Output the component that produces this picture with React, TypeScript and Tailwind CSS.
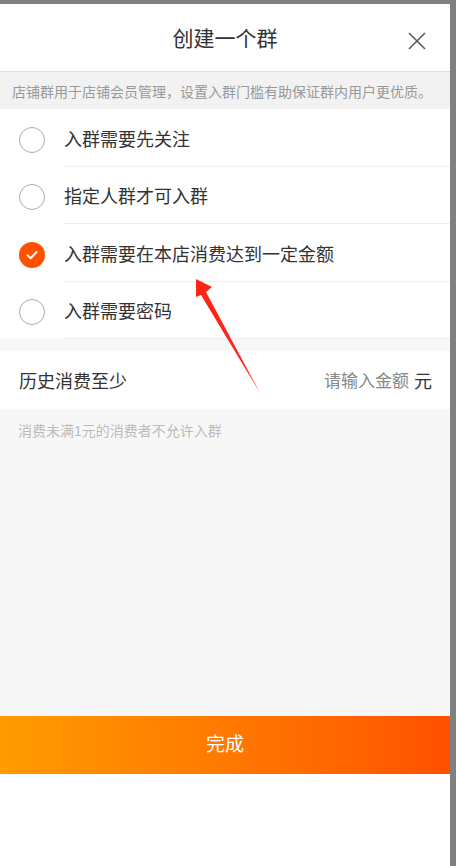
const options = [
  { label: "入群需要先关注", checked: false, h: "h-[58px]" },
  { label: "指定人群才可入群", checked: false, h: "h-[57px]" },
  { label: "入群需要在本店消费达到一定金额", checked: true, h: "h-[58px]" },
  { label: "入群需要密码", checked: false, h: "h-[57px]" },
]

function Radio({ checked }: { checked: boolean }) {
  if (checked) {
    return (
      <div className="w-[26px] h-[26px] mt-[3px] rounded-full bg-[#ff5000] flex items-center justify-center shrink-0">
        <svg width="14" height="14" viewBox="0 0 14 14" fill="none">
          <path d="M2.5 7.2 L5.7 10.2 L11.5 4" stroke="white" strokeWidth="2" strokeLinecap="round" strokeLinejoin="round" />
        </svg>
      </div>
    )
  }
  return <div className="w-[26px] h-[26px] mt-[3px] rounded-full border-[1.5px] border-[#aaaaaa] shrink-0"></div>
}

export default function App() {
  return (
    <div
      className="relative w-[456px] h-[866px] bg-[#808080] pt-[4px] pr-[6px]"
      style={{ fontFamily: '"Liberation Sans", "Noto Sans CJK SC", sans-serif' }}
    >
      <div className="w-[450px] h-[862px] bg-white flex flex-col">
        {/* Header */}
        <div className="relative h-[68px] flex items-center justify-center border-b border-[#dddddd] shrink-0">
          <h1 className="text-[21px] leading-[24px] text-[#333333] mt-[2px]">创建一个群</h1>
          <button className="absolute right-[24px] top-[28px]">
            <svg width="18" height="18" viewBox="0 0 18 18">
              <path d="M1 1 L17 17 M17 1 L1 17" stroke="#555b63" strokeWidth="1.6" />
            </svg>
          </button>
        </div>

        {/* Notice */}
        <div className="h-[37px] bg-[#f2f2f2] flex items-center pl-[12px] shrink-0">
          <p className="text-[14px] leading-[16px] text-[#999999] whitespace-nowrap mt-[2px]">
            店铺群用于店铺会员管理，设置入群门槛有助保证群内用户更优质。
          </p>
        </div>

        {/* Options */}
        <div className="shrink-0">
          {options.map((o) => (
            <div key={o.label} className={`${o.h} flex items-center pl-[19px]`}>
              <Radio checked={o.checked} />
              <div className="flex-1 h-full ml-[19px] border-b border-[#eeeeee] flex items-center">
                <span className="text-[18px] leading-[20px] text-[#333333] mt-[4px]">{o.label}</span>
              </div>
            </div>
          ))}
        </div>

        <div className="flex-1 bg-[#f7f7f7] flex flex-col pt-[12px]">
          {/* Amount row */}
          <div className="h-[58px] bg-white flex items-center justify-between pl-[19px] pr-[18px] shrink-0">
            <span className="text-[18px] leading-[20px] text-[#333333] mt-[4px]">历史消费至少</span>
            <div className="flex items-center mt-[4px]">
              <span className="text-[17px] leading-[20px] text-[#888888]">请输入金额</span>
              <span className="text-[18px] leading-[20px] text-[#333333] ml-[5px]">元</span>
            </div>
          </div>
          <p className="pl-[18px] pt-[14px] text-[14px] leading-[16px] text-[#bbbbbb]">消费未满1元的消费者不允许入群</p>
        </div>

        {/* Submit */}
        <button className="h-[58px] shrink-0 bg-gradient-to-r from-[#ff9b00] to-[#ff5000] text-white text-[19px] leading-[22px]">
          完成
        </button>
        <div className="h-[92px] bg-white shrink-0"></div>
      </div>

      {/* Annotation arrow */}
      <svg className="absolute left-0 top-0 pointer-events-none" width="456" height="866">
        <polygon points="196,279 212,287 206,292 260,393 201,295 196,297" fill="#ff2418" />
      </svg>
    </div>
  )
}
